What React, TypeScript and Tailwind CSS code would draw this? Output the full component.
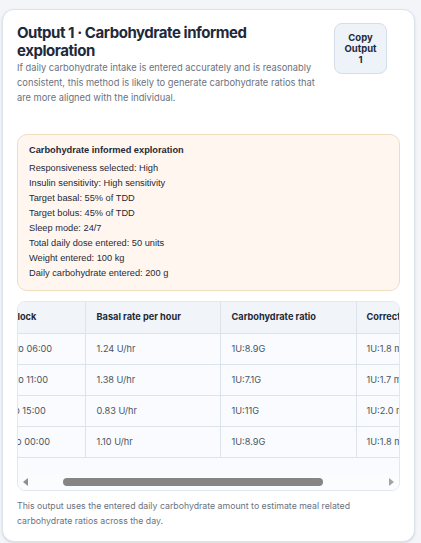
import { useEffect, useRef } from 'react'

const settings = [
  'Responsiveness selected: High',
  'Insulin sensitivity: High sensitivity',
  'Target basal: 55% of TDD',
  'Target bolus: 45% of TDD',
  'Sleep mode: 24/7',
  'Total daily dose entered: 50 units',
  'Weight entered: 100 kg',
  'Daily carbohydrate entered: 200 g',
]

const rows = [
  { block: '00:00 to 06:00', basal: '1.24 U/hr', carb: '1U:8.9G', corr: '1U:1.8 mmol/L' },
  { block: '06:00 to 11:00', basal: '1.38 U/hr', carb: '1U:7.1G', corr: '1U:1.7 mmol/L' },
  { block: '11:00 to 15:00', basal: '0.83 U/hr', carb: '1U:11G', corr: '1U:2.0 mmol/L' },
  { block: '15:00 to 00:00', basal: '1.10 U/hr', carb: '1U:8.9G', corr: '1U:1.8 mmol/L' },
]

export default function App() {
  const scroller = useRef<HTMLDivElement>(null)

  useEffect(() => {
    if (scroller.current) scroller.current.scrollLeft = 44
  }, [])

  return (
    <div className="min-h-[543px] bg-[#f3f5f8] pt-[9px] pb-[6px] pl-[2px] pr-[6px] font-['Inter',sans-serif]">
      <section className="rounded-xl border border-[#dbe3ed] bg-white px-3.5 pt-3.5 pb-3 shadow-sm">
        <header className="flex items-start gap-3">
          <div className="flex-1">
            <h2 className="text-[15px] font-bold leading-[18px] tracking-[-0.03em] text-[#1e293b]">
              Output 1 · Carbohydrate informed exploration
            </h2>
            <p className="text-[9.3px] leading-[15px] text-[#6b7280]">
              If daily carbohydrate intake is entered accurately and is reasonably consistent, this
              method is likely to generate carbohydrate ratios that are more aligned with the
              individual.
            </p>
          </div>
          <button className="-mt-px mr-[13px] w-[53px] shrink-0 rounded-lg border border-[#d5dde8] bg-[#eef3f9] px-2 py-2 text-center text-[9.5px] font-bold leading-[11px] text-[#1e293b]">
            Copy Output 1
          </button>
        </header>

        <div className="mt-[29px] rounded-[10px] border border-[#f2dcc0] bg-[#fff7ef] px-[11px] pt-2 pb-[9px] font-['Liberation_Sans',Arial,sans-serif] text-[#1f2937]">
          <h3 className="text-[9.25px] font-bold leading-[15px]">Carbohydrate informed exploration</h3>
          <ul className="mt-[3px] text-[9.25px] leading-[15px]">
            {settings.map((s) => (
              <li key={s}>{s}</li>
            ))}
          </ul>
        </div>

        <div className="mt-2.5 overflow-hidden rounded-lg border border-[#e2e8f0] bg-[#f9fbfe]">
          <div ref={scroller} className="overflow-hidden">
            <table className="w-[514px] table-fixed border-collapse text-left text-[9.2px] text-[#1f2937]">
              <colgroup>
                <col className="w-[111px]" />
                <col className="w-[135px]" />
                <col className="w-[136px]" />
                <col className="w-[132px]" />
              </colgroup>
              <thead>
                <tr className="h-[31px] bg-[#f1f5f9]">
                  <th className="whitespace-nowrap border-b border-[#dde3ea] pl-[13px] pr-[11px] font-bold">Time block</th>
                  <th className="whitespace-nowrap border-b border-l border-[#dde3ea] px-[11px] font-bold">
                    Basal rate per hour
                  </th>
                  <th className="whitespace-nowrap border-b border-l border-[#dde3ea] px-[11px] font-bold">
                    Carbohydrate ratio
                  </th>
                  <th className="whitespace-nowrap border-b border-l border-[#dde3ea] px-[10px] font-bold">
                    Correction factor
                  </th>
                </tr>
              </thead>
              <tbody>
                {rows.map((r) => (
                  <tr key={r.block} className="h-[31px] text-[#4b5563]">
                    <td className="whitespace-nowrap border-b border-[#dde3ea] pl-[13px] pr-[11px]">{r.block}</td>
                    <td className="whitespace-nowrap border-b border-l border-[#dde3ea] px-[11px]">{r.basal}</td>
                    <td className="whitespace-nowrap border-b border-l border-[#dde3ea] px-[11px]">{r.carb}</td>
                    <td className="whitespace-nowrap border-b border-l border-[#dde3ea] px-[10px]">{r.corr}</td>
                  </tr>
                ))}
              </tbody>
            </table>
            <div className="h-4 w-[514px]" />
          </div>

          {/* horizontal scrollbar */}
          <div className="flex h-4 items-center bg-[#fbfcfe]">
            <div className="flex w-[15px] justify-center">
              <svg width="5" height="8" viewBox="0 0 5 8">
                <path d="M5 0 L0 4 L5 8 Z" fill="#8f8f8f" />
              </svg>
            </div>
            <div className="flex flex-1 items-center pl-[30px] pr-[61px]">
              <div className="h-2 flex-1 rounded-full bg-[#858585]" />
            </div>
            <div className="flex w-[15px] justify-center">
              <svg width="5" height="8" viewBox="0 0 5 8">
                <path d="M0 0 L5 4 L0 8 Z" fill="#a3a3a3" />
              </svg>
            </div>
          </div>
        </div>

        <p className="mt-2 text-[8.75px] leading-[15px] text-[#6b7280]">
          This output uses the entered daily carbohydrate amount to estimate meal related
          carbohydrate ratios across the day.
        </p>
      </section>
    </div>
  )
}
